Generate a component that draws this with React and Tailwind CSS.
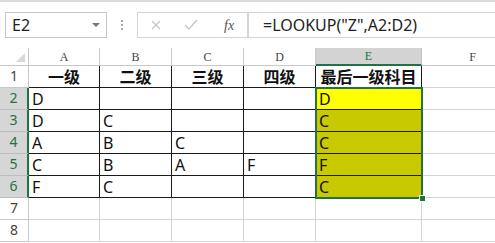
import React from 'react';

const COLS = [
  { key: 'A', w: 'w-[71px]' },
  { key: 'B', w: 'w-[72px]' },
  { key: 'C', w: 'w-[72px]' },
  { key: 'D', w: 'w-[72px]' },
  { key: 'E', w: 'w-[106px]' },
  { key: 'F', w: 'w-[102px]' },
];

const ROWS = [
  ['一级', '二级', '三级', '四级', '最后一级科目'],
  ['D', '', '', '', 'D'],
  ['D', 'C', '', '', 'C'],
  ['A', 'B', 'C', '', 'C'],
  ['C', 'B', 'A', 'F', 'F'],
  ['F', 'C', '', '', 'C'],
  ['', '', '', '', ''],
  ['', '', '', '', ''],
];

const sans = { fontFamily: '"Noto Sans", "Noto Sans CJK SC", sans-serif' };

const FormulaBar = () => (
  <div className="h-[48px] border-t-2 border-[#d9d9d9] bg-white flex items-start pt-[10px] pl-[5px]">
    <div className="w-[102px] h-[26px] border border-[#c6c6c6] flex items-center justify-between pl-[6px] pr-[6px]">
      <span className="text-[16px] text-[#222]" style={sans}>E2</span>
      <span className="w-0 h-0 border-l-[4px] border-r-[4px] border-t-[4px] border-l-transparent border-r-transparent border-t-[#777]" />
    </div>
    <div className="w-[30px] h-[26px] flex flex-col items-center justify-center gap-[2px]">
      <span className="w-[2px] h-[2px] bg-[#aaa]" />
      <span className="w-[2px] h-[2px] bg-[#aaa]" />
      <span className="w-[2px] h-[2px] bg-[#aaa]" />
    </div>
    <div className="w-[111px] h-[26px] border border-[#d4d4d4] flex items-center pl-[12px]">
      <svg width="12" height="12" viewBox="0 0 12 12" className="mr-[22px]">
        <path d="M2 2 L10 10 M10 2 L2 10" stroke="#c8c8c8" strokeWidth="1.4" />
      </svg>
      <svg width="14" height="12" viewBox="0 0 14 12" className="mr-[26px]">
        <path d="M1 6 L5 10 L13 1" stroke="#c8c8c8" strokeWidth="1.4" fill="none" />
      </svg>
      <span className="italic text-[14px] text-[#555]" style={{ fontFamily: '"Liberation Serif", serif' }}>fx</span>
    </div>
    <div className="flex-1 h-[26px] border border-[#d4d4d4] border-r-0 flex items-center pl-[14px]">
      <span className="text-[16px] text-[#222]" style={sans}>=LOOKUP("Z",A2:D2)</span>
    </div>
  </div>
);

const HeaderRow = () => (
  <div className="flex h-[18px] bg-white">
    <div className="w-[29px] shrink-0 border-r border-b border-[#c8c8c8] relative">
      <span className="absolute right-[3px] bottom-[3px] w-0 h-0 border-l-[9px] border-b-[9px] border-l-transparent border-b-[#d8d8d8]" />
    </div>
    {COLS.map((c) => {
      const sel = c.key === 'E';
      return (
        <div
          key={c.key}
          className={`${c.w} shrink-0 flex items-center justify-center text-[12px] border-r ${
            sel ? 'bg-[#d3d3d3] text-[#217346] border-b-2 border-b-[#217346] border-r-[#c0c0c0]' : 'text-[#444] border-b border-[#c8c8c8]'
          }`}
          style={{ fontFamily: '"Liberation Serif", serif' }}
        >
          {c.key}
        </div>
      );
    })}
  </div>
);

const cellBorder = (r, ci) => {
  // table A1:E6 has black borders
  if (r <= 5 && ci <= 4) return 'border-[#1a1a1a]';
  if (r <= 5 && ci === 5) return 'border-[#d4d4d4]';
  return 'border-[#d4d4d4]';
};

const cellBg = (r, ci) => {
  if (ci !== 4) return 'bg-white';
  if (r === 1) return 'bg-[#ffff00]';
  if (r >= 2 && r <= 5) return 'bg-[#c9c900]';
  return 'bg-white';
};

export default function App() {
  return (
    <div className="w-[495px] h-[243px] overflow-hidden bg-white relative" style={sans}>
      <FormulaBar />
      <HeaderRow />
      {ROWS.map((row, r) => {
        const selRow = r >= 1 && r <= 5;
        return (
          <div key={r} className="flex h-[22px]">
            <div
              className={`w-[29px] shrink-0 flex items-end justify-center pb-[1px] text-[14px] border-b ${
                selRow
                  ? 'bg-[#d6d6d6] text-[#217346] border-r-2 border-r-[#217346] border-b-[#bdbdbd]'
                  : 'bg-white text-[#444] border-r border-[#c8c8c8]'
              }`}
            >
              {r + 1}
            </div>
            {COLS.map((c, ci) => {
              const v = ci < 5 ? row[ci] : '';
              const head = r === 0;
              return (
                <div
                  key={c.key}
                  className={`${c.w} shrink-0 border-r border-b ${cellBorder(r, ci)} ${
                    r === 0 && ci === 5 ? 'border-l-0' : ''
                  } ${cellBg(r, ci)} flex items-center ${head ? 'justify-center font-bold text-[16px]' : 'pl-[3px] text-[16px]'} text-[#111] leading-none`}
                >
                  {v}
                </div>
              );
            })}
          </div>
        );
      })}
      <div className="absolute left-[315px] top-[87px] w-[108px] h-[112px] border-2 border-[#217346] pointer-events-none" />
      <div className="absolute left-[419px] top-[195px] w-[7px] h-[7px] bg-[#217346] border border-white" />
    </div>
  );
}
